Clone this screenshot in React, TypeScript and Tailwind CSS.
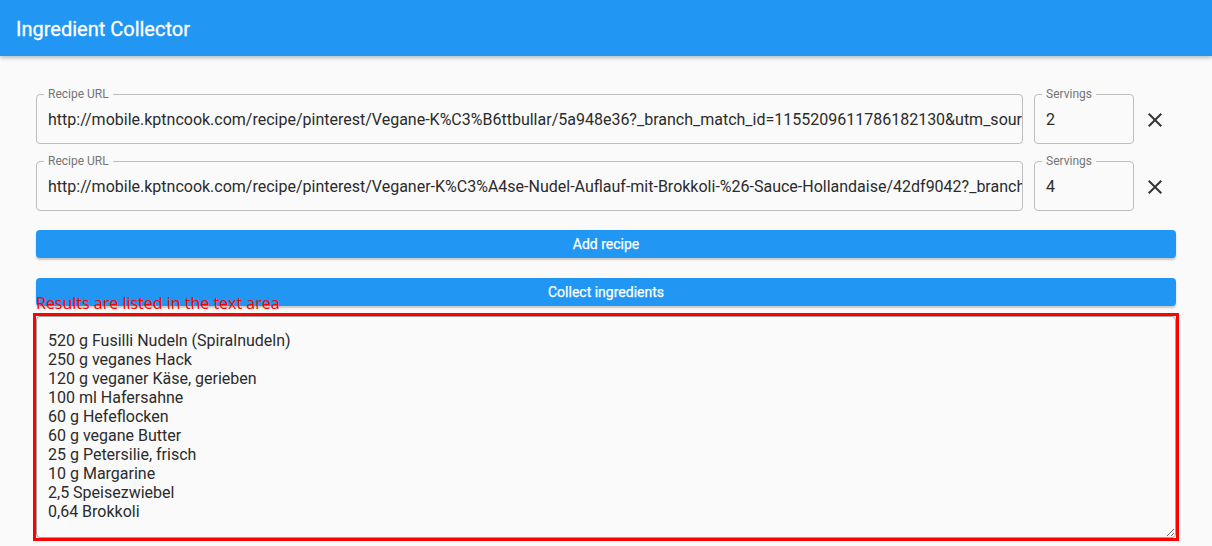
import React from 'react';

const font = { fontFamily: 'Roboto, "Liberation Sans", sans-serif' };

const recipes = [
  {
    url: 'http://mobile.kptncook.com/recipe/pinterest/Vegane-K%C3%B6ttbullar/5a948e36?_branch_match_id=1155209611786182130&utm_source=pinterest&utm_medium=sharing',
    servings: '2',
  },
  {
    url: 'http://mobile.kptncook.com/recipe/pinterest/Veganer-K%C3%A4se-Nudel-Auflauf-mit-Brokkoli-%26-Sauce-Hollandaise/42df9042?_branch_match_id=1155209611786182130',
    servings: '4',
  },
];

const ingredients = [
  '520 g Fusilli Nudeln (Spiralnudeln)',
  '250 g veganes Hack',
  '120 g veganer Käse, gerieben',
  '100 ml Hafersahne',
  '60 g Hefeflocken',
  '60 g vegane Butter',
  '25 g Petersilie, frisch',
  '10 g Margarine',
  '2,5 Speisezwiebel',
  '0,64 Brokkoli',
];

function Field({ label, value, className }: { label: string; value: string; className: string }) {
  return (
    <div className={`relative h-[50px] rounded border border-[#bdbdbd] ${className}`}>
      <span className="absolute -top-[8px] left-[7px] bg-[#fafafa] px-1 text-[12px] leading-[14px] text-[#757575]">
        {label}
      </span>
      <div className="flex h-full items-center overflow-hidden whitespace-nowrap pl-[11px] pr-[2px] pt-[2px] text-[16px] text-[#2b2b2b]">
        {value}
      </div>
    </div>
  );
}

export default function App() {
  return (
    <div className="min-h-screen bg-[#fafafa]" style={font}>
      <header className="flex h-14 items-center bg-[#2196f3] px-4 shadow-[0_2px_4px_rgba(0,0,0,0.25)]">
        <h1 className="pt-[2px] text-[20px] font-normal text-white [-webkit-text-stroke:0.3px_white]">Ingredient Collector</h1>
      </header>

      <main className="px-9 pt-[38px]">
        <div className="flex flex-col gap-[17px]">
          {recipes.map((r, i) => (
            <div key={i} className="flex items-center">
              <Field label="Recipe URL" value={r.url} className="flex-1 min-w-0" />
              <Field label="Servings" value={r.servings} className="ml-[11px] w-[100px] shrink-0" />
              <button className="flex w-[42px] shrink-0 items-center justify-center pt-[2px] text-[#333]">
                <svg viewBox="0 0 24 24" className="h-6 w-6" fill="currentColor">
                  <path d="M19 6.41 17.59 5 12 10.59 6.41 5 5 6.41 10.59 12 5 17.59 6.41 19 12 13.41 17.59 19 19 17.59 13.41 12z" />
                </svg>
              </button>
            </div>
          ))}
        </div>

        <button className="mt-[19px] h-7 w-full rounded bg-[#2196f3] text-[14px] font-normal text-white shadow-[0_2px_2px_rgba(0,0,0,0.2)] [-webkit-text-stroke:0.25px_white]">
          Add recipe
        </button>
        <button className="mt-5 h-7 w-full rounded bg-[#2196f3] text-[14px] font-normal text-white shadow-[0_2px_2px_rgba(0,0,0,0.2)] [-webkit-text-stroke:0.25px_white]">
          Collect ingredients
        </button>

        <div className="relative -mx-[3px] mt-[7px] border-[3px] border-[#ff0000]">
          <span
            className="absolute -top-[23px] left-0 whitespace-nowrap text-[16px] leading-[20px] text-[#ff0000]"
            style={{ fontFamily: '"Open Sans", "Noto Sans", sans-serif' }}
          >
            Results are listed in the text area
          </span>
          <textarea
            readOnly
            value={ingredients.join('\n')}
            className="block h-[222px] w-full rounded border border-[#a0a0a0] bg-[#fafafa] px-[11px] pt-[14px] text-[16px] leading-[19px] text-[#2b2b2b] outline-none"
          />
        </div>
      </main>
    </div>
  );
}
